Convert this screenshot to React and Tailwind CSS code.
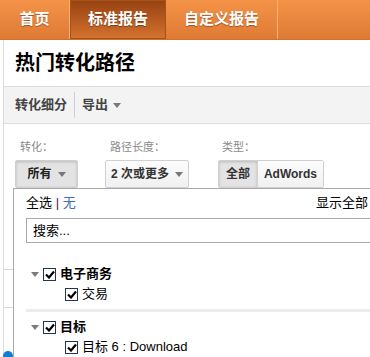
import React from 'react';

const Caret = ({ className = "" }) => (
  <svg width="8" height="5" viewBox="0 0 8 5" className={className}>
    <polygon points="0,0 8,0 4,5" fill="currentColor" />
  </svg>
);

const Check = () => (
  <span className="inline-flex w-[13px] h-[13px] border border-[#1d3654] bg-white items-center justify-center shrink-0">
    <svg width="10" height="9" viewBox="0 0 10 9">
      <path d="M1 4.5 L4 7.5 L9 1.5" stroke="#000" strokeWidth="2.2" fill="none" />
    </svg>
  </span>
);

export default function App() {
  const tabs = [
    { label: '首页', w: 'w-[70px]', active: false },
    { label: '标准报告', w: 'w-[96px]', active: true },
    { label: '自定义报告', w: 'w-[112px]', active: false },
  ];

  return (
    <div className="relative w-[370px] h-[357px] overflow-hidden bg-white font-['Liberation_Sans','Noto_Sans_CJK_SC',sans-serif]">
      {/* top nav */}
      <div className="flex h-[40px] bg-gradient-to-b from-[#f49347] to-[#df7a35] border-b border-[#d06f2e]">
        {tabs.map((t) => (
          <div
            key={t.label}
            className={
              t.active
                ? `${t.w} flex items-center justify-center bg-gradient-to-b from-[#984312] to-[#d4722f] border border-[#a4541b] text-white font-bold text-[15px] [text-shadow:0_1px_1px_rgba(0,0,0,0.4)]`
                : `${t.w} flex items-center justify-center border-r border-[#f7ad74] text-white font-bold text-[15px] [text-shadow:0_1px_1px_rgba(0,0,0,0.35)]`
            }
          >
            {t.label}
          </div>
        ))}
        <div className="flex-1" />
      </div>

      <div className="ml-[3px] border-l border-[#dcdcdc] h-[317px]">
        {/* title */}
        <div className="h-[46px] flex items-center pl-[11px] text-[20px] font-bold text-black">
          热门转化路径
        </div>

        {/* toolbar */}
        <div className="h-[38px] flex items-center bg-[#f3f3f3] border-t border-b border-[#dedede] pl-[11px] text-[13px] font-bold text-[#444]">
          <span>转化细分</span>
          <span className="mx-[7px] w-px h-[26px] bg-[#cfcfcf]" />
          <span>导出</span>
          <Caret className="ml-[5px] text-[#777]" />
        </div>

        {/* filters */}
        <div className="flex pl-[11px] pt-[16px]">
          <div className="w-[90px] flex flex-col">
            <span className="pl-[5px] text-[11px] leading-[14px] text-[#8a8a8a]">转化：</span>
            <div className="mt-[6px] w-[63px] h-[28px] flex items-center justify-center gap-[6px] bg-[#e3e3e3] border border-[#cfcfcf] rounded-[2px] shadow-[inset_0_1px_3px_rgba(0,0,0,0.18)] text-[12px] font-bold text-[#222]">
              所有 <Caret className="text-[#777]" />
            </div>
          </div>
          <div className="w-[113px] flex flex-col">
            <span className="pl-[5px] text-[11px] leading-[14px] text-[#8a8a8a]">路径长度：</span>
            <div className="mt-[6px] w-[84px] h-[28px] flex items-center justify-center gap-[6px] bg-gradient-to-b from-[#fcfcfc] to-[#f0f0f0] border border-[#d0d0d0] rounded-[2px] text-[12px] font-bold text-[#333]">
              2 次或更多 <Caret className="text-[#777]" />
            </div>
          </div>
          <div className="flex flex-col">
            <span className="pl-[4px] text-[11px] leading-[14px] text-[#8a8a8a]">类型：</span>
            <div className="mt-[6px] h-[28px] flex border border-[#d0d0d0] rounded-[2px] text-[12px] font-bold text-[#333]">
              <div className="w-[39px] flex items-center justify-center bg-[#e3e3e3] shadow-[inset_0_1px_3px_rgba(0,0,0,0.18)] border-r border-[#d0d0d0]">全部</div>
              <div className="w-[65px] flex items-center justify-center bg-gradient-to-b from-[#fcfcfc] to-[#f1f1f1]">AdWords</div>
            </div>
          </div>
        </div>

        {/* dropdown panel with gutter */}
        <div className="flex">
          <div className="w-[9px] shrink-0">
            <div className="h-[81px]" />
            <div className="h-[38px] border-t border-[#d8d8d8]" />
            <div className="border-t border-[#d8d8d8]" />
          </div>
          <div className="w-[380px] shrink-0 border-l border-t border-[#aaaaaa] bg-white pl-[12px] h-[170px]">
            <div className="flex justify-between pr-[25px] pt-[6px] text-[13px] leading-[16px]">
              <span className="text-black">
                全选 <span className="text-[#5b1537]">|</span> <span className="text-[#3c6cb4]">无</span>
              </span>
              <span className="text-black">显示全部</span>
            </div>
            <div className="mt-[7px] h-[25px] border border-[#aaaaaa] flex items-center pl-[6px] text-[13px] text-black">
              搜索...
            </div>

            <div className="mt-[21px] text-[13px]">
              <div className="h-[20px] flex items-center pl-[5px]">
                <Caret className="text-[#7a7a7a] mr-[4px]" />
                <Check />
                <span className="ml-[4px] font-bold text-black">电子商务</span>
              </div>
              <div className="h-[20px] flex items-center pl-[39px]">
                <Check />
                <span className="ml-[4px] text-black">交易</span>
              </div>
              <div className="mt-[5px] h-[3px] bg-[#ececec]" />
              <div className="mt-[5px] h-[20px] flex items-center pl-[5px]">
                <Caret className="text-[#7a7a7a] mr-[4px]" />
                <Check />
                <span className="ml-[4px] font-bold text-black">目标</span>
              </div>
              <div className="h-[20px] flex items-center pl-[39px]">
                <Check />
                <span className="ml-[4px] text-black">目标 6 : Download</span>
              </div>
            </div>
          </div>
        </div>
      </div>

      {/* chart point peeking from behind */}
      <div className="absolute left-[3px] top-[351px] w-[10px] h-[10px] rounded-full bg-[#0b7fd3]" />
    </div>
  );
}
